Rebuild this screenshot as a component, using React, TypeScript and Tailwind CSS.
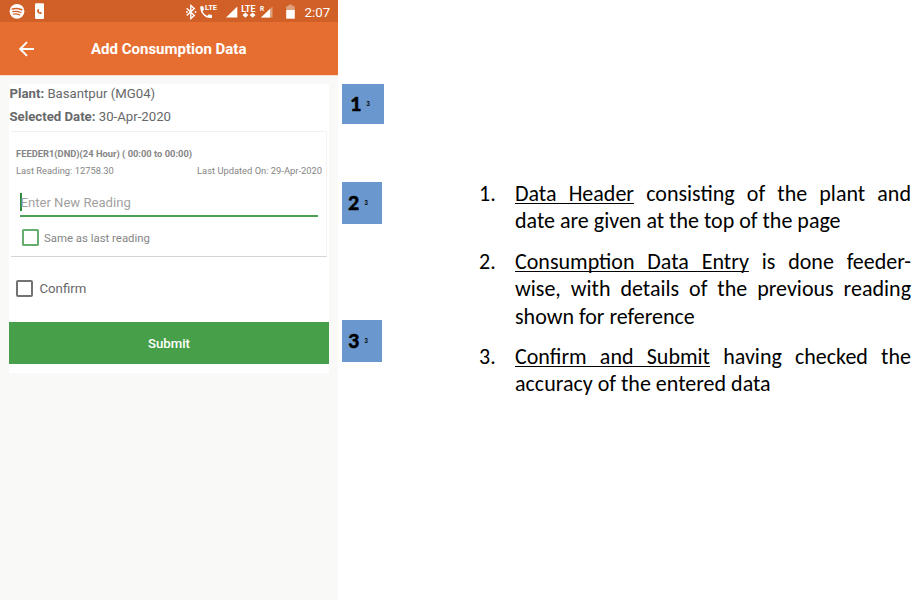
import React from "react";

function StatusBar() {
  return (
    <div className="flex h-[22px] items-center bg-[#d06027] text-white">
      <svg width="338" height="22" viewBox="0 0 338 22" fill="#fff">
        <circle cx="17" cy="11.3" r="7.4" />
        <g fill="none" stroke="#d06027" strokeLinecap="round">
          <path d="M12.4 9c3-.8 6.5-.5 9.3.8" strokeWidth="1.6" />
          <path d="M12.9 11.7c2.700-.7 5.600-.4 8 .8" strokeWidth="1.3" />
          <path d="M13.300 14.200c2.200-.5 4.600-.3 6.500.8" strokeWidth="1.1" />
        </g>
        <rect x="35" y="3.300" width="9" height="15.700" rx="1.200" />
        <path d="M37.300 9.500c-.8 2.800 1.200 5 4.300 4.300l.3-1.300-1.300-.6-.7.5c-.6-.3-1-.8-1.200-1.400l.5-.7-.5-1.200z" fill="#d06027" />
        <path d="M186.700 8.300l7.600 7.200-3.500 3V5.500l3.500 3-7.600 7" fill="none" stroke="#fff" strokeWidth="1.400" />
        <circle cx="187" cy="12" r=".9" /><circle cx="195.500" cy="12" r=".9" />
        <path d="M200.300 6.300h2.900l.9 3.300-1.500 1.700c1 2 2.500 3.700 4.500 4.700l1.700-1.700 3.200.8v2.900c-6.600 1-12.300-4.700-11.700-11.700z" />
        <text x="205" y="9.800" fontSize="7.500" fontWeight="700" className="font-['Roboto',sans-serif]">LTE</text>
        <path d="M226 17.500L237.300 6.500v11z" />
        <text x="241.300" y="11.500" fontSize="8.800" fontWeight="700" className="font-['Roboto',sans-serif]">LTE</text>
        <path d="M242.500 15.100l2.900-2.700 2.900 2.700-2.900 2.700zM249.700 15.100l2.900-2.700 2.900 2.700-2.900 2.700z" />
        <text x="260" y="11" fontSize="6.500" fontWeight="700" className="font-['Roboto',sans-serif]">R</text>
        <path d="M261 17.500L272.500 6.500v11z" fill="#e0a17e" />
        <path d="M261 17.500L270 9v8.500z" />
        <path d="M288.500 4.700h4v1.500h2.300V10h-8.600V6.200h2.300z" fill="#e0a17e" />
        <path d="M286.200 10h8.600v8.700h-8.600z" />
        <text x="304.500" y="16.500" fontSize="13.300" className="font-['Roboto',sans-serif]">2:07</text>
      </svg>
    </div>
  );
}

function Phone() {
  return (
    <div className="h-[600px] w-[338px] shrink-0 bg-[#f9f9f8] font-['Roboto',sans-serif]">
      <StatusBar />
      <header className="flex h-[53px] items-center bg-[#e76e31] pl-[19px] text-white">
        <svg width="16" height="16" viewBox="0 0 16 16" fill="none" stroke="#fff" strokeWidth="1.900">
          <path d="M15 8H1.500M8 1.200L1.200 8 8 14.800" />
        </svg>
        <h1 className="ml-[56px] pt-[1px] text-[15px] leading-[20px] font-bold whitespace-nowrap">Add Consumption Data</h1>
      </header>
      <div className="h-px bg-[#f8dfd2]" />
      <main className="mt-[8px] ml-[9px] h-[289px] w-[320px] bg-white">
        <div className="h-[47px] pl-[0.500px] text-[13.200px] text-[#67686a]">
          <p className="h-[22px] leading-[20px]"><b>Plant:</b> Basantpur (MG04)</p>
          <p className="h-[22px] leading-[22px]"><b>Selected Date:</b> 30-Apr-2020</p>
        </div>
        <section className="ml-[2px] h-[126px] w-[316px] border-t border-r border-b border-t-[#f0f0f0] border-r-[#f3f3f3] border-b-[#d5d5d5] px-[5px] pt-[13px] text-[#858585]">
          <p className="h-[17px] text-[9.350px] leading-[17px] font-bold whitespace-nowrap">FEEDER1(DND)(24 Hour) ( 00:00 to 00:00)</p>
          <div className="-mr-[1px] flex h-[18px] justify-between text-[9.350px] leading-[17px]">
            <span>Last Reading: 12758.30</span>
            <span>Last Updated On: 29-Apr-2020</span>
          </div>
          <div className="mt-[11px] ml-[4px] flex h-[26px] w-[298px] border-b-2 border-[#4d9f56] pt-[2px]">
            <span className="h-[18px] w-[1.500px] bg-[#2f8d3c]" />
            <span className="-ml-[1px] pt-[1px] text-[13.100px] leading-[18px] text-[#a1a1a1]">Enter New Reading</span>
          </div>
          <label className="mt-[12px] ml-[6px] flex h-[18px] items-center text-[11.400px]">
            <span className="mb-[1px] h-[17px] w-[17px] rounded-[1.500px] border-2 border-[#66ad70]" />
            <span className="ml-[5px] pt-[1px]">Same as last reading</span>
          </label>
        </section>
        <label className="mt-[22px] ml-[7px] flex h-[18px] items-center text-[13.200px] text-[#67686a]">
          <span className="h-[17px] w-[17px] rounded-[2px] border-2 border-[#737373]" />
          <span className="ml-[6.500px] pt-[1px]">Confirm</span>
        </label>
        <button className="mt-[25px] flex h-[42px] w-[320px] items-center justify-center bg-[#489f49] pt-[1px] text-[13.200px] font-medium text-white">Submit</button>
      </main>
    </div>
  );
}

function Marker({ n, className }: { n: string; className: string }) {
  return (
    <div className={"flex items-center bg-[#6a98ce] text-black " + className}>
      <b className="text-[22px] leading-[24px] [-webkit-text-stroke:0.500px_black]">{n}</b>
      <b className="ml-[5px] pt-[1px] text-[7px]">3</b>
    </div>
  );
}

function Note({ n, children }: { n: string; children: React.ReactNode }) {
  return (
    <li className="flex">
      <span className="w-[36px] shrink-0">{n}</span>
      <div className="w-[396px] whitespace-nowrap">{children}</div>
    </li>
  );
}

function Full({ children }: { children: React.ReactNode }) {
  return <p className="[text-align-last:justify]">{children}</p>;
}

function Term({ children }: { children: React.ReactNode }) {
  return <span className="underline decoration-1 underline-offset-2 [text-decoration-skip-ink:none]">{children}</span>;
}

export default function App() {
  return (
    <div className="flex h-[600px] w-[920px] overflow-hidden bg-white">
      <Phone />
      <aside className="ml-[4px] w-[42px] shrink-0 pt-[84px] font-['Carlito','Open_Sans',sans-serif]">
        <Marker n="1" className="h-[40px] w-[42px] pl-[8px]" />
        <Marker n="2" className="mt-[58px] h-[42px] w-[40px] pl-[6px]" />
        <Marker n="3" className="mt-[96px] h-[42px] w-[40px] pl-[6px]" />
      </aside>
      <ol className="ml-[95px] flex flex-col gap-[12.500px] pt-[179.900px] font-['Carlito','Lato',sans-serif] text-[22px] leading-[27.600px] text-black">
        <Note n="1.">
          <Full><Term>Data Header</Term> consisting of the plant and</Full>
          <p>date are given at the top of the page</p>
        </Note>
        <Note n="2.">
          <Full><Term>Consumption Data Entry</Term> is done feeder-</Full>
          <Full>wise, with details of the previous reading</Full>
          <p>shown for reference</p>
        </Note>
        <Note n="3.">
          <Full><Term>Confirm and Submit</Term> having checked the</Full>
          <p>accuracy of the entered data</p>
        </Note>
      </ol>
    </div>
  );
}
